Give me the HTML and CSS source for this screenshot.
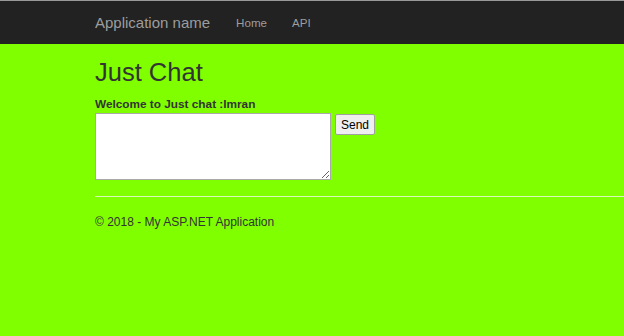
FILE: index.html
```html
<!DOCTYPE html>
<html lang="en">
<head>
    <meta charset="UTF-8">
    <title>Just Chat - My ASP.NET Application</title>
    <link rel="stylesheet" href="styles.css">
</head>
<body>

    <!-- Navbar -->
    <div class="navbar">
        <div class="container nav-inner">
            <a class="brand" href="#">Application name</a>
            <a class="nav-link" href="#">Home</a>
            <a class="nav-link" href="#">API</a>
        </div>
    </div>

    <div class="container body-content">
        <h2 class="title">Just Chat</h2>
        <label class="welcome" for="message">Welcome to Just chat :Imran</label>
        <div class="chat-row">
            <textarea id="message" class="chat-box"></textarea>
            <button class="send-btn" type="button">Send</button>
        </div>
        <hr class="divider">
        <footer class="footer">
            <p>&copy; 2018 - My ASP.NET Application</p>
        </footer>
    </div>

</body>
</html>
```

FILE: styles.css
```css
* {
    margin: 0;
    padding: 0;
    box-sizing: border-box;
}
body {
    font-family: "Liberation Sans", Arial, sans-serif;
    font-size: 12px;
    color: #333;
    background: #80ff00;
}

.container {
    padding-left: 95px;
}

/* Navbar */
.navbar {
    height: 44px;
    background: #222;
    border-top: 1px solid #999;
}
.nav-inner {
    display: flex;
    align-items: center;
    height: 100%;
}
.brand {
    color: #9d9d9d;
    font-size: 15px;
    text-decoration: none;
    margin-right: 26px;
}
.nav-link {
    color: #9d9d9d;
    font-size: 11.6px;
    text-decoration: none;
    margin-right: 25px;
}

/* Isi */
.title {
    font-size: 25.5px;
    font-weight: 500;
    line-height: 1.1;
    margin-top: 14px;
    margin-bottom: 11px;
}
.welcome {
    display: block;
    font-weight: bold;
    font-size: 11.8px;
    margin-bottom: 2px;
}
.chat-row {
    display: flex;
    align-items: flex-start;
    gap: 4px;
}
.chat-box {
    width: 236px;
    height: 67px;
    border: 1px solid #a9a9a9;
    background: #fff;
}
.send-btn {
    margin-top: 1px;
    width: 40px;
    height: 21px;
    font-family: "Liberation Sans", Arial, sans-serif;
    font-size: 12px;
    color: #000;
    background: #efefef;
    border: 1px solid #a0a0a0;
    border-radius: 2px;
}

.divider {
    margin-top: 16px;
    border: 0;
    border-top: 1px solid #d8f7b8;
}
.footer {
    padding-top: 18px;
}
```
